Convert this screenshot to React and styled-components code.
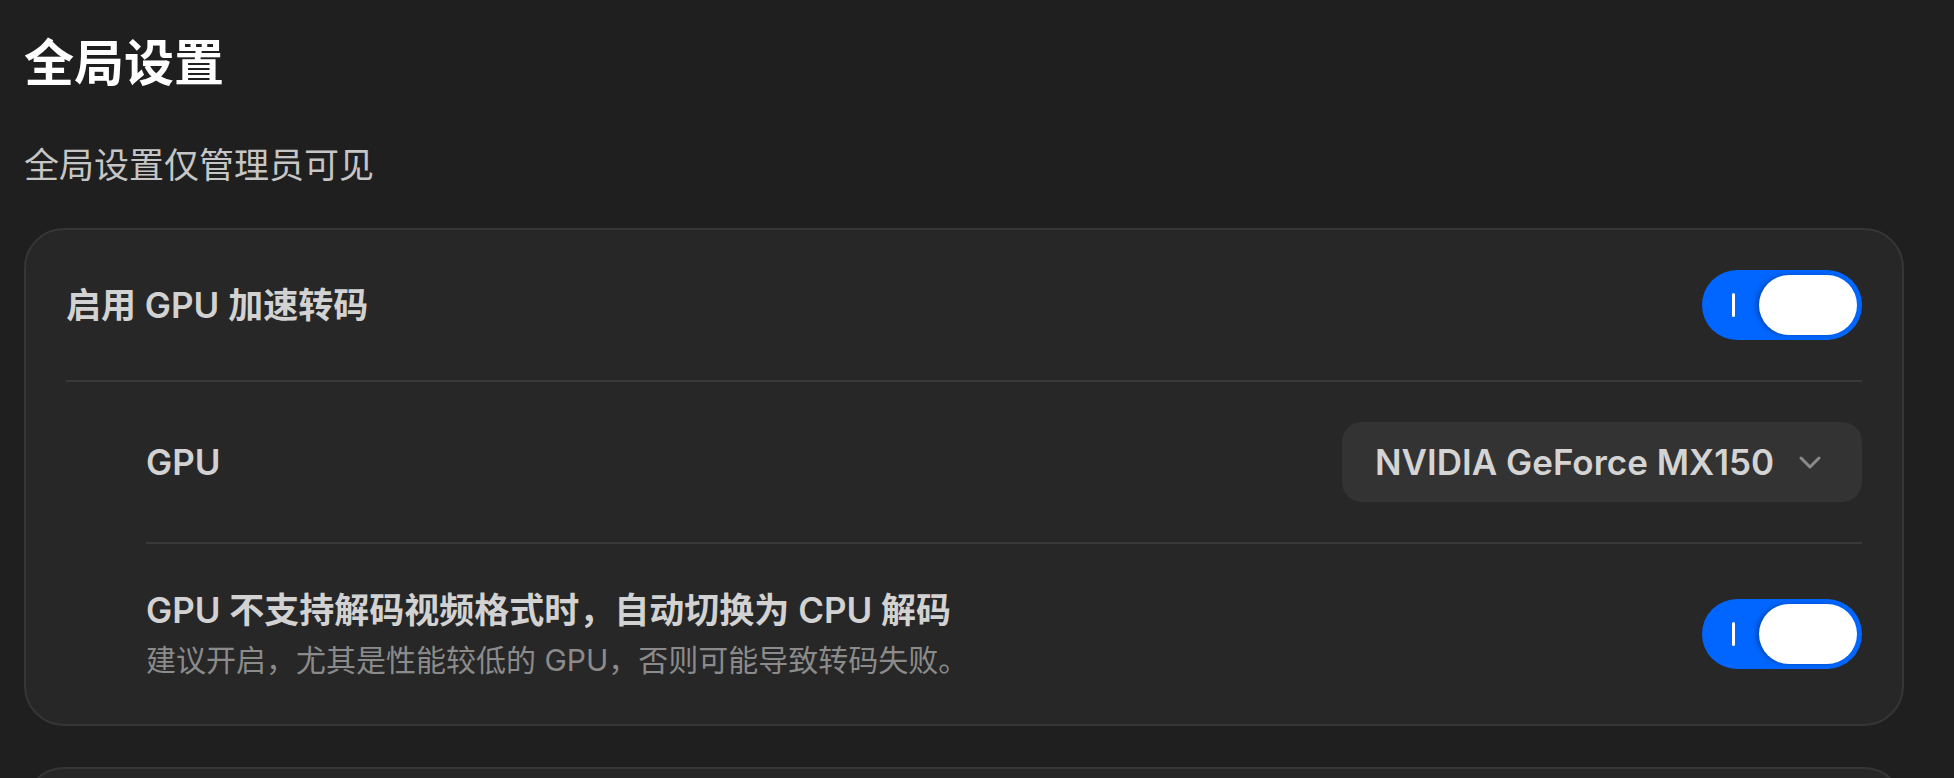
import styled, { createGlobalStyle } from "styled-components";
import { useState } from "react";

const GlobalStyle = createGlobalStyle`
  body {
    margin: 0;
    background-color: #1f1f1f;
    font-family: Inter, "Noto Sans CJK SC", sans-serif;
  }
`

function Toggle({ checked, onChange }) {
  return (
    <Track role="switch" aria-checked={checked} $on={checked} onClick={() => onChange(!checked)}>
      <Mark $on={checked} />
      <Thumb />
    </Track>
  )
}

function Chevron() {
  return (
    <svg width="22" height="13" viewBox="0 0 22 13" fill="none">
      <path d="M2 2l9 9 9-9" stroke="#8a8a8a" strokeWidth="3" strokeLinecap="round" strokeLinejoin="round" />
    </svg>
  )
}

function App() {
  const [gpuOn, setGpuOn] = useState(true);
  const [fallback, setFallback] = useState(true);

  return (
    <Page>
      <GlobalStyle />
      <Title>全局设置</Title>
      <Subtitle>全局设置仅管理员可见</Subtitle>
      <CardList>
        <Card>
          <Row>
            <Label>启用 GPU 加速转码</Label>
            <Toggle checked={gpuOn} onChange={setGpuOn} />
          </Row>
          <SubGroup>
            <Row>
              <Label>GPU</Label>
              <Select type="button">
                <span>NVIDIA GeForce MX150</span>
                <Chevron />
              </Select>
            </Row>
            <Row $divided>
              <TextBlock>
                <Label $tall>GPU 不支持解码视频格式时，自动切换为 CPU 解码</Label>
                <Hint>建议开启，尤其是性能较低的 GPU，否则可能导致转码失败。</Hint>
              </TextBlock>
              <Toggle checked={fallback} onChange={setFallback} />
            </Row>
          </SubGroup>
        </Card>
        <Card $empty />
      </CardList>
    </Page>
  )
}

const Page = styled.main`
  padding: 29px 50px 0 24px;
  min-height: 100vh;
  box-sizing: border-box;
`

const Title = styled.h1`
  margin: 0;
  font-size: 50px;
  line-height: 68px;
  font-weight: 700;
  color: #ffffff;
`

const Subtitle = styled.p`
  margin: 43px 0 0;
  font-size: 35px;
  line-height: 50px;
  color: #c6c6c6;
`

const CardList = styled.div`
  margin-top: 38px;
  display: flex;
  flex-direction: column;
  gap: 41px;
`

const Card = styled.section`
  background-color: #272727;
  border: 2px solid #363636;
  border-radius: 40px;
  padding: 0 40px;
  min-height: ${p => p.$empty ? "160px" : "auto"};
`

const Row = styled.div`
  display: flex;
  align-items: center;
  justify-content: space-between;
  gap: 40px;
  padding: 40px 0;
  border-top: ${p => p.$divided ? "2px solid #393939" : "none"};
`

const SubGroup = styled.div`
  border-top: 2px solid #393939;
  padding-left: 80px;
`

const TextBlock = styled.div`
  display: flex;
  flex-direction: column;
`

const Label = styled.div`
  font-size: 35px;
  line-height: ${p => p.$tall ? "52px" : "50px"};
  font-weight: 600;
  color: #d2d2d2;
`

const Hint = styled.div`
  font-size: 30px;
  line-height: 48px;
  color: #8b8b8b;
`

const Select = styled.button`
  box-sizing: border-box;
  width: 520px;
  height: 80px;
  display: flex;
  align-items: center;
  justify-content: space-between;
  padding: 0 41px 0 33px;
  border: none;
  border-radius: 20px;
  background-color: #333333;
  color: #d4d4d4;
  font-family: inherit;
  font-size: 35px;
  font-weight: 600;
  cursor: pointer;
`

const Track = styled.button`
  box-sizing: border-box;
  width: 160px;
  height: 70px;
  flex-shrink: 0;
  display: flex;
  align-items: center;
  padding: 0 5px 0 30px;
  border: none;
  border-radius: 35px;
  background-color: ${p => p.$on ? "#0066ff" : "#4a4a4a"};
  cursor: pointer;
`

const Mark = styled.span`
  width: 3px;
  height: 24px;
  border-radius: 2px;
  background-color: #ffffff;
  opacity: ${p => p.$on ? 1 : 0};
`

const Thumb = styled.span`
  margin-left: auto;
  width: 98px;
  height: 60px;
  border-radius: 30px;
  background-color: #ffffff;
  box-shadow: -3px 0 4px rgba(0, 0, 0, 0.25);
`

export default App
